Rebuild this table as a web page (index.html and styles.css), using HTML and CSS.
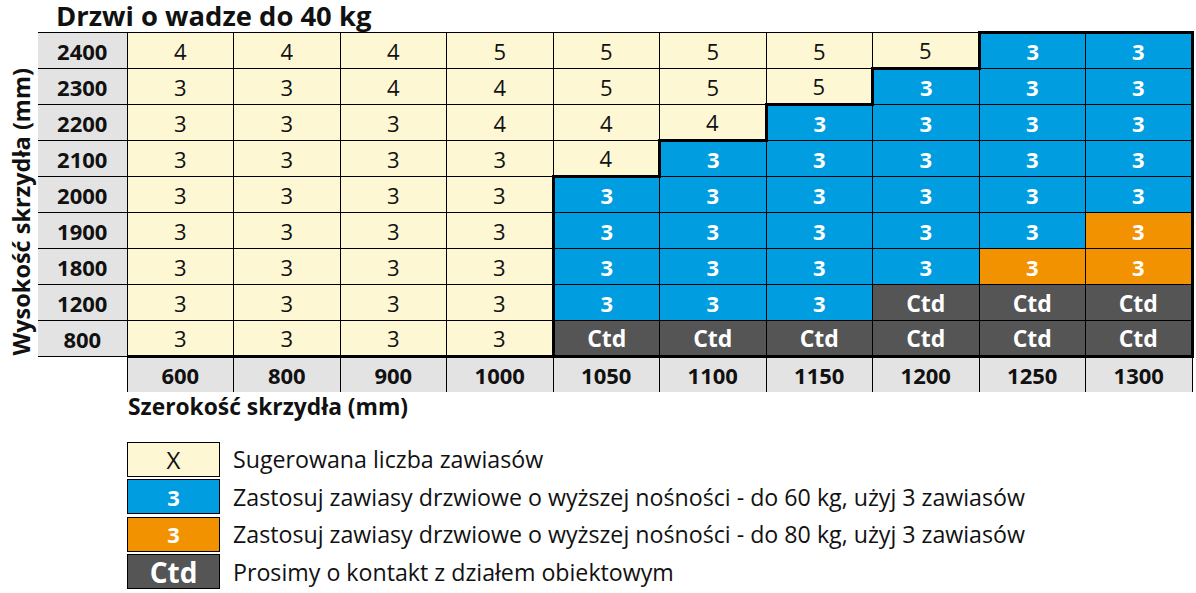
FILE: index.html
```html
<!DOCTYPE html>
<html lang="pl">
<head>
<meta charset="utf-8">
<title>Drzwi o wadze do 40 kg</title>
<link rel="stylesheet" href="styles.css">
</head>
<body>
<div class="page">
  <h1 class="title">Drzwi o wadze do 40 kg</h1>
  <div class="main">
    <div class="ylabel-col"><div class="ylabel">Wysokość skrzydła (mm)</div></div>
    <table class="grid">
      <colgroup>
        <col class="c-head"><col class="c"><col class="c"><col class="c"><col class="c"><col class="c"><col class="c"><col class="c"><col class="c"><col class="c"><col class="c">
      </colgroup>
      <tbody>
        <tr><th>2400</th><td class="y">4</td><td class="y">4</td><td class="y">4</td><td class="y">5</td><td class="y">5</td><td class="y">5</td><td class="y">5</td><td class="y">5</td><td class="b tt tl">3</td><td class="b tt tr">3</td></tr>
        <tr><th>2300</th><td class="y">3</td><td class="y">3</td><td class="y">4</td><td class="y">4</td><td class="y">5</td><td class="y">5</td><td class="y">5</td><td class="b tt tl">3</td><td class="b">3</td><td class="b tr">3</td></tr>
        <tr><th>2200</th><td class="y">3</td><td class="y">3</td><td class="y">3</td><td class="y">4</td><td class="y">4</td><td class="y">4</td><td class="b tt tl">3</td><td class="b">3</td><td class="b">3</td><td class="b tr">3</td></tr>
        <tr><th>2100</th><td class="y">3</td><td class="y">3</td><td class="y">3</td><td class="y">3</td><td class="y">4</td><td class="b tt tl">3</td><td class="b">3</td><td class="b">3</td><td class="b">3</td><td class="b tr">3</td></tr>
        <tr><th>2000</th><td class="y">3</td><td class="y">3</td><td class="y">3</td><td class="y">3</td><td class="b tt tl">3</td><td class="b">3</td><td class="b">3</td><td class="b">3</td><td class="b">3</td><td class="b tr">3</td></tr>
        <tr><th>1900</th><td class="y">3</td><td class="y">3</td><td class="y">3</td><td class="y">3</td><td class="b tl">3</td><td class="b">3</td><td class="b">3</td><td class="b">3</td><td class="b">3</td><td class="o tr">3</td></tr>
        <tr><th>1800</th><td class="y">3</td><td class="y">3</td><td class="y">3</td><td class="y">3</td><td class="b tl">3</td><td class="b">3</td><td class="b">3</td><td class="b">3</td><td class="o">3</td><td class="o tr">3</td></tr>
        <tr><th>1200</th><td class="y">3</td><td class="y">3</td><td class="y">3</td><td class="y">3</td><td class="b tl">3</td><td class="b">3</td><td class="b">3</td><td class="g">Ctd</td><td class="g">Ctd</td><td class="g tr">Ctd</td></tr>
        <tr class="last"><th>800</th><td class="y">3</td><td class="y">3</td><td class="y">3</td><td class="y">3</td><td class="g tl">Ctd</td><td class="g">Ctd</td><td class="g">Ctd</td><td class="g">Ctd</td><td class="g">Ctd</td><td class="g tr">Ctd</td></tr>
        <tr class="xhead"><td class="corner"></td><th>600</th><th>800</th><th>900</th><th>1000</th><th>1050</th><th>1100</th><th>1150</th><th>1200</th><th>1250</th><th>1300</th></tr>
      </tbody>
    </table>
  </div>
  <div class="xlabel">Szerokość skrzydła (mm)</div>
  <ul class="legend">
    <li><span class="swatch sw-y">X</span><span class="ltext">Sugerowana liczba zawiasów</span></li>
    <li><span class="swatch sw-b">3</span><span class="ltext">Zastosuj zawiasy drzwiowe o wyższej nośności - do 60 kg, użyj 3 zawiasów</span></li>
    <li><span class="swatch sw-o">3</span><span class="ltext">Zastosuj zawiasy drzwiowe o wyższej nośności - do 80 kg, użyj 3 zawiasów</span></li>
    <li><span class="swatch sw-g">Ctd</span><span class="ltext">Prosimy o kontakt z działem obiektowym</span></li>
  </ul>
</div>
</body>
</html>
```

FILE: styles.css
```css
* { box-sizing: border-box; }
html, body { margin: 0; padding: 0; background: #fff; }
body { font-family: "Open Sans", "Liberation Sans", sans-serif; color: #111; }

.page { width: 1196px; }

.title {
  margin: 0 0 0 56px;
  font-size: 27.4px;
  line-height: 31px;
  font-weight: 700;
  color: #111;
}

.main { display: flex; }
.ylabel-col {
  width: 38px;
  display: flex;
  align-items: center;
  justify-content: center;
}
.ylabel {
  writing-mode: vertical-rl;
  transform: rotate(180deg);
  font-weight: 700;
  font-size: 23.5px;
  line-height: 26px;
  white-space: nowrap;
  padding-right: 4px;
}

.grid {
  border-collapse: collapse;
  table-layout: fixed;
  width: 1154px;
}
.c-head { width: 89px; }
.c { width: 106.5px; }

.grid th, .grid td {
  height: 36px;
  padding: 0;
  text-align: center;
  vertical-align: middle;
  font-size: 22px;
  line-height: 26px;
  border: 1px solid #000;
}
.grid tbody th {
  background: #e3e3e3;
  font-weight: 700;
  border-left: none;
}
.grid td.y { background: #fdf7d4; color: #111; font-weight: 400; }
.grid td.b { background: #009ee0; color: #fff; font-weight: 700; }
.grid td.o { background: #f39200; color: #fff; font-weight: 700; }
.grid td.g { background: #555555; color: #fff; font-weight: 700; font-size: 23px; }

.grid td.tt { border-top: 3px solid #000; }
.grid td.tl { border-left: 3px solid #000; }
.grid td.tr { border-right: 3px solid #000; }
.grid tr.last td { border-bottom: 3px solid #000; }

.grid tr.xhead th,
.grid tr.xhead td { height: 35px; }
.grid tr.xhead th {
  background: #e3e3e3;
  border-bottom: none;
  border-left: 1px solid #000;
}
.grid tr.xhead td.corner {
  border: none;
  background: #fff;
}

.xlabel {
  margin: 2px 0 0 128px;
  font-size: 22.8px;
  line-height: 26px;
  font-weight: 700;
}

.legend {
  list-style: none;
  margin: 22px 0 0 127px;
  padding: 0;
  display: flex;
  flex-direction: column;
  gap: 2.5px;
}
.legend li {
  display: flex;
  align-items: center;
  gap: 13px;
}
.swatch {
  width: 93px;
  height: 35px;
  border: 1px solid #000;
  display: flex;
  align-items: center;
  justify-content: center;
  font-size: 22px;
  font-weight: 700;
  color: #fff;
}
.sw-y { background: #fdf7d4; color: #111; font-weight: 400; font-size: 24px; }
.sw-b { background: #009ee0; }
.sw-o { background: #f39200; }
.sw-g { background: #555555; font-size: 28px; }
.ltext {
  font-size: 23.2px;
  line-height: 28px;
  color: #111;
}
```
